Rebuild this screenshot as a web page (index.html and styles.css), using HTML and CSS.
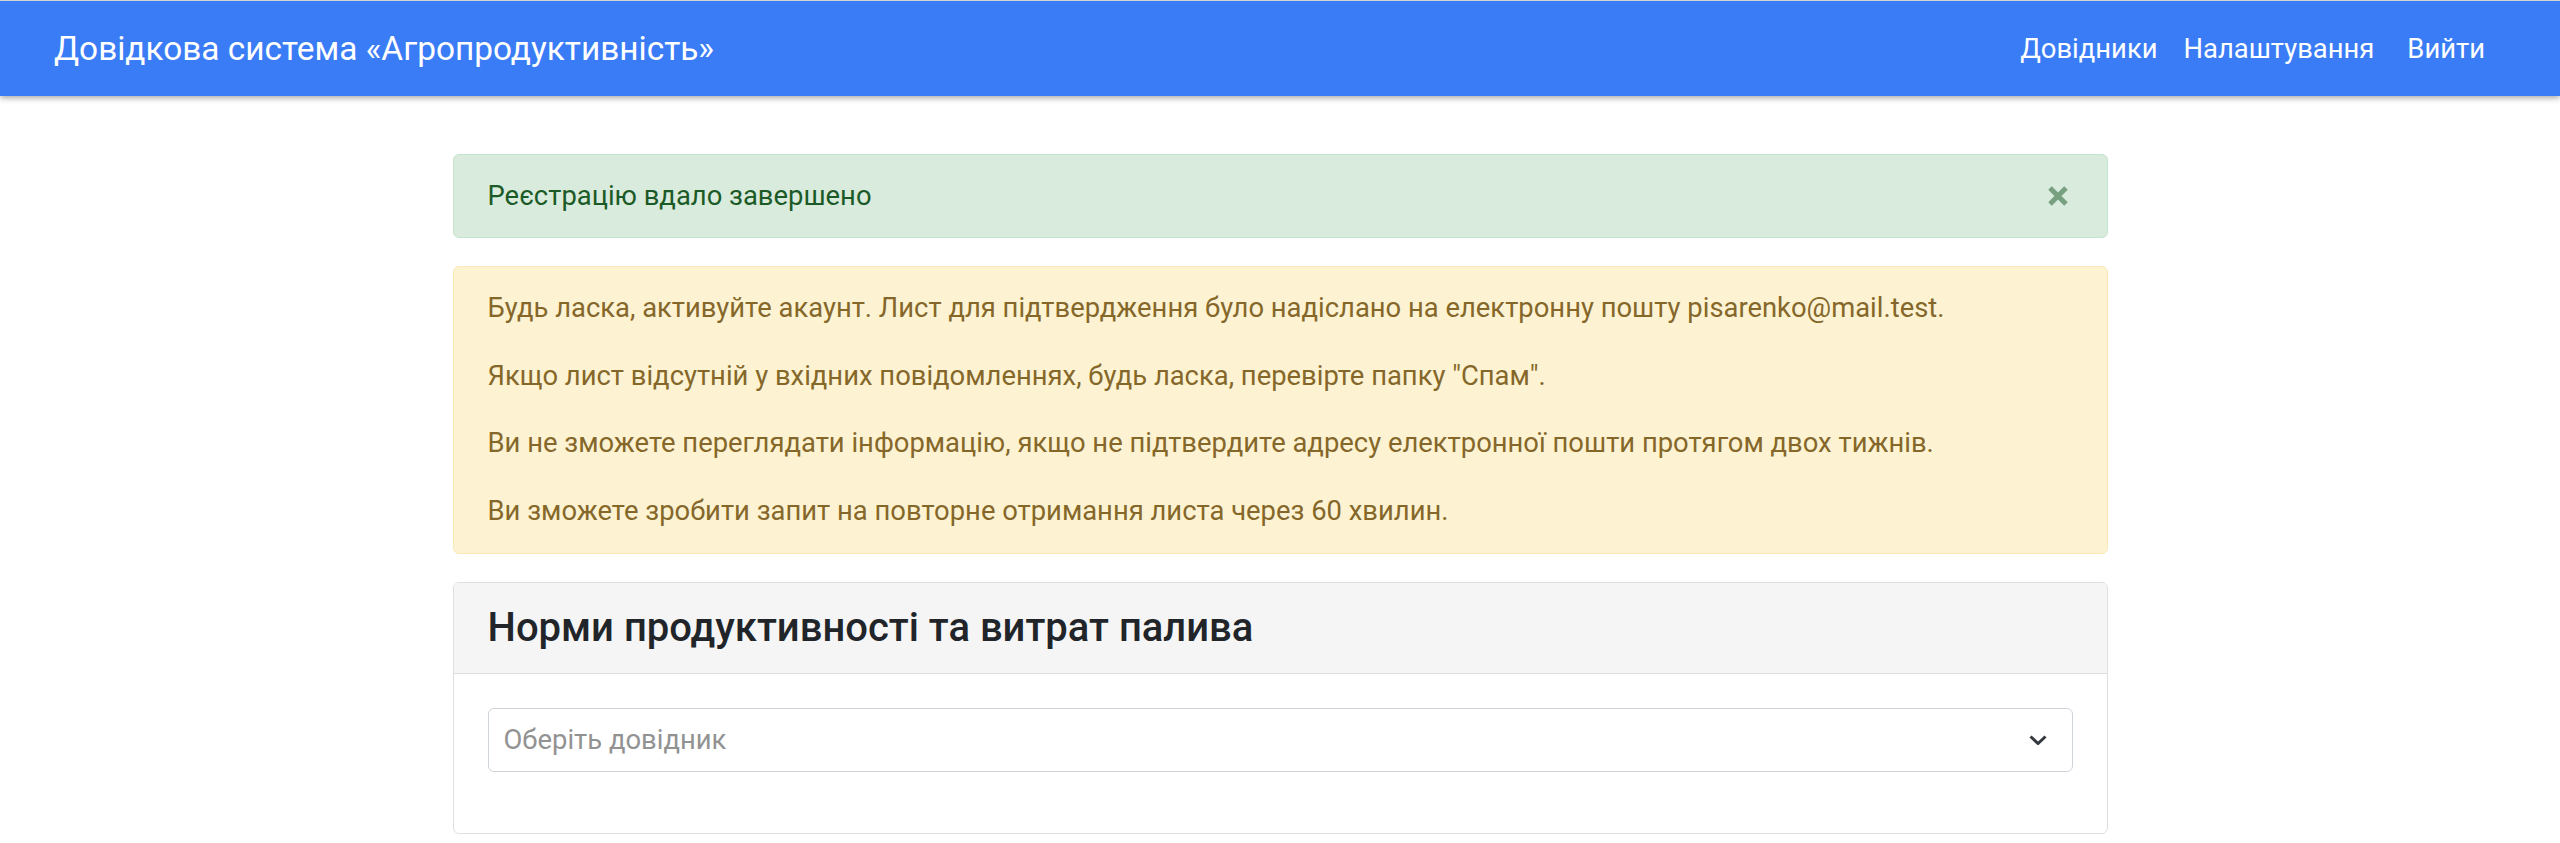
FILE: index.html
```html
<!DOCTYPE html>
<html lang="uk">

<head>
    <meta charset="utf-8" />
    <title>Довідкова система «Агропродуктивність»</title>
    <link rel="stylesheet" href="styles.css">
</head>

<body>
    <nav class="topbar">
        <a class="brand" href="#">Довідкова система «Агропродуктивність»</a>
        <ul class="menu">
            <li><a href="#">Довідники</a></li>
            <li><a href="#">Налаштування</a></li>
            <li class="logout"><a href="#">Вийти</a></li>
        </ul>
    </nav>

    <main class="content">
        <div class="alert alert-success">
            <span>Реєстрацію вдало завершено</span>
            <button class="close" type="button" aria-label="Закрити">
                <svg width="22" height="22" viewBox="0 0 22 22">
                    <path d="M3 3 L19 19 M19 3 L3 19" />
                </svg>
            </button>
        </div>

        <div class="alert alert-warning">
            <p>Будь ласка, активуйте акаунт. Лист для підтвердження було надіслано на електронну пошту pisarenko@mail.test.</p>
            <p>Якщо лист відсутній у вхідних повідомленнях, будь ласка, перевірте папку "Спам".</p>
            <p>Ви не зможете переглядати інформацію, якщо не підтвердите адресу електронної пошти протягом двох тижнів.</p>
            <p>Ви зможете зробити запит на повторне отримання листа через 60 хвилин.</p>
        </div>

        <div class="card">
            <div class="card-header">
                <h4>Норми продуктивності та витрат палива</h4>
            </div>
            <div class="card-body">
                <div class="picker">
                    <span>Оберіть довідник</span>
                    <svg width="18" height="10" viewBox="0 0 18 10">
                        <path d="M1.5 1.5 L9 8.5 L16.5 1.5" />
                    </svg>
                </div>
            </div>
        </div>
    </main>
</body>

</html>
```

FILE: styles.css
```css
* {
    font-family: Roboto, "Noto Sans", "Liberation Sans", sans-serif;
    box-sizing: border-box;
    padding: 0;
    margin: 0;
}

body {
    background: #fff;
    color: #212529;
    font-size: 27.4px;
    line-height: 40px;
}

/* top bar */
.topbar {
    display: flex;
    align-items: center;
    justify-content: space-between;
    height: 96px;
    padding: 0 62px 0 54px;
    background: #397cf6;
    border-top: 1px solid #d4d4d4;
    box-shadow: 0 2px 6px rgba(0, 0, 0, 0.35);
}

.brand {
    color: #fff;
    text-decoration: none;
    font-size: 33.4px;
}

.menu {
    display: flex;
    list-style: none;
}

.menu a {
    display: block;
    padding: 0 13px;
    color: #fff;
    text-decoration: none;
    font-size: 27.4px;
}

.menu .logout {
    margin-left: 7px;
}

/* page body */
.content {
    width: 1655px;
    margin: 58px auto 0;
}

.alert {
    border: 1px solid transparent;
    border-radius: 6px;
    margin-bottom: 28px;
}

.alert-success {
    display: flex;
    align-items: center;
    justify-content: space-between;
    padding: 21px 38px 21px 34px;
    background: #d9ebdc;
    border-color: #c6e3cc;
    color: #1b5a27;
}

.close {
    display: flex;
    background: none;
    border: 0;
    cursor: pointer;
}

.close path {
    stroke: #155724;
    stroke-width: 5;
    opacity: 0.5;
}

.alert-warning {
    padding: 21px 34px;
    background: #fdf3d2;
    border-color: #fbe9b5;
    color: #85672a;
}

.alert-warning p {
    line-height: 41px;
    margin-bottom: 26.5px;
}

.alert-warning p:last-child {
    margin-bottom: 0;
}

.card {
    border: 1px solid #dfdfdf;
    border-radius: 6px;
    overflow: hidden;
}

.card-header {
    padding: 20px 34px;
    background: #f5f5f5;
    border-bottom: 1px solid #dfdfdf;
}

.card-header h4 {
    font-size: 40px;
    font-weight: 500;
    line-height: 50px;
    color: #212529;
}

.card-body {
    padding: 34px 34px 61px;
}

.picker {
    display: flex;
    align-items: center;
    justify-content: space-between;
    height: 64px;
    padding: 0 25px 0 15px;
    border: 1px solid #ced4da;
    border-radius: 6px;
    color: #929292;
}

.picker path {
    fill: none;
    stroke: #343a40;
    stroke-width: 3;
}
```
